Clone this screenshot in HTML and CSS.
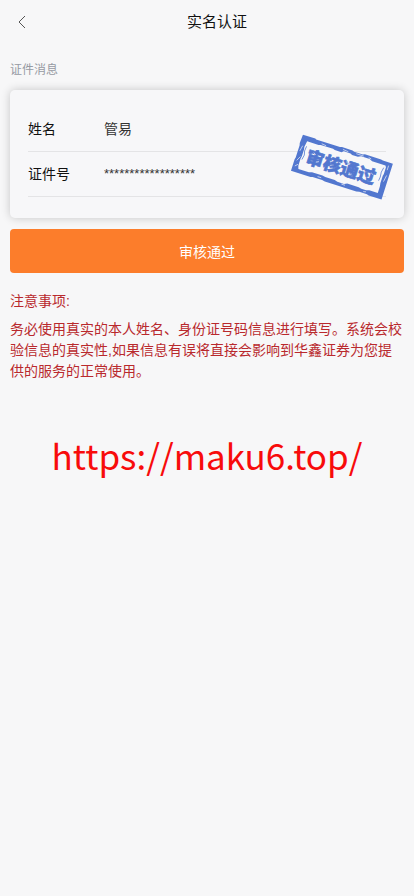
FILE: index.html
```html
<!DOCTYPE html>
<html lang="zh-CN">
<head>
<meta charset="utf-8">
<meta name="viewport" content="width=device-width, initial-scale=1">
<title>实名认证</title>
<link rel="stylesheet" href="styles.css">
</head>
<body>
<header class="navbar">
  <button class="back" type="button" aria-label="返回">
    <svg width="8" height="14" viewBox="0 0 8 14" fill="none" stroke="#555" stroke-width="1"><path d="M7 1 1 7l6 6"/></svg>
  </button>
  <h1 class="title">实名认证</h1>
</header>
<main class="page">
  <h2 class="section-label">证件消息</h2>
  <form class="form">
    <div class="card">
      <div class="row">
        <label class="row-label" for="name">姓名</label>
        <input class="row-input" id="name" type="text" value="管易" readonly>
      </div>
      <div class="row">
        <label class="row-label" for="idno">证件号</label>
        <input class="row-input masked" id="idno" type="text" value="******************" readonly>
      </div>
      <svg class="stamp" width="104" height="68" viewBox="0 0 104 68" aria-hidden="true">
        <g transform="translate(52 34) rotate(17.6)">
          <path fill="#5277cf" d="M-47-19H-34L-33-18.500H-8L-6-19H5L7-18.300H16L18-19H35L37-18.500H47.500V19H34L32 18.400H24L21 19H-12L-15 18.500H-25L-27 19H-47.500V7L-47 5V-8L-47.500-10Z"/>
          <path fill="#f7f7f9" d="M-41-14H-29L-27-14.600H-14L-12-14H-5L-3-15.500H4L6-14.500H12L15-16H24L27-14.500H41L42-13V-6L41.500-4V4L42 7V14H33L30 15H25L22 14.200H10L7 15.500H0L-3 14.500H-13L-16 14H-27L-30 15H-41L-42 12V5L-41.500 2V-5L-42-8Z"/>
          <g fill="none" stroke="#5277cf" stroke-width=".7">
            <path d="M-40-9l-.5 5 1 4-1 5M40-12l-1 5 .5 5-.5 4"/>
          </g>
          <text class="stamp-text" x="-1" y="7" text-anchor="middle">审核通过</text>
          <g fill="none" stroke="#f7f7f9" stroke-width=".6" stroke-linecap="round">
            <path d="M-44-8l-1 5M-43 3l-2 4M-45 13l2-2M-26-16l4 .5M-4-17l5 .5M10-17h7M23-17l2 .4M44-15v4M45-5l-1 6M28 17l2-.5M5 16.500h3M-20 16.500h3"/>
            <path d="M-31-5l2 1M-26 3l2-1M-11 5l2-1M3-6l2 1M9 5l2-1M24 5l1-2M30-3l2 1"/>
          </g>
        </g>
      </svg>
    </div>
    <button class="submit" type="button">审核通过</button>
  </form>
  <section class="notice">
    <h3 class="notice-title">注意事项:</h3>
    <p class="notice-text">务必使用真实的本人姓名、身份证号码信息进行填写。系统会校验信息的真实性,如果信息有误将直接会影响到华鑫证券为您提供的服务的正常使用。</p>
  </section>
  <p class="site-url">https://maku6.top/</p>
</main>
</body>
</html>
```
FILE: styles.css
```css
* {
  box-sizing: border-box;
}

body {
  margin: 0;
  min-height: 100vh;
  background: #f7f7f8;
  color: #111;
  font-family: "Liberation Sans", "Noto Sans CJK SC", sans-serif;
  font-size: 14px;
}

h1, h2, h3, p {
  margin: 0;
  font-weight: 400;
}

button, input {
  padding: 0;
  border: 0;
  background: none;
  color: inherit;
  font: inherit;
}

.navbar {
  display: grid;
  grid-template-columns: 44px 1fr 24px;
  align-items: center;
  height: 44px;
}

.back {
  display: flex;
  align-items: center;
  justify-content: center;
  height: 44px;
}

.title {
  font-size: 15px;
  line-height: 22px;
  text-align: center;
}

.page {
  padding: 15px 10px 0;
}

.section-label {
  color: #969aa3;
  font-size: 12px;
  line-height: 22px;
}

.form {
  display: grid;
  gap: 11px;
  margin-top: 9px;
}

.card {
  position: relative;
  padding: 17px 18px 21px;
  border-radius: 5px;
  background: #f7f7f9;
  box-shadow: 0 0 10px rgba(0, 0, 0, 0.2);
}

.row {
  display: flex;
  align-items: center;
  height: 45px;
  padding-bottom: 2px;
  border-bottom: 1px solid #e4e4e6;
}

.row-label {
  width: 76px;
}

.row-input {
  flex: 1;
  min-width: 0;
  height: 24px;
  color: #333;
  outline: none;
}

.masked {
  font-size: 13px;
}

.stamp {
  position: absolute;
  top: 43px;
  right: 10px;
}

.stamp-text {
  fill: #5277cf;
  stroke: #5277cf;
  stroke-width: 0.6px;
  font-family: "Noto Sans CJK SC", sans-serif;
  font-size: 18px;
  font-weight: 900;
}

.submit {
  height: 44px;
  border-radius: 4px;
  background: #fc7d2b;
  color: #fff;
}

.notice {
  margin-top: 18px;
  color: #b9292d;
  line-height: 21px;
}

.notice-title {
  font-size: 14px;
}

.notice-text {
  margin-top: 7px;
}

.site-url {
  margin-top: 47px;
  color: #f80b0b;
  font-family: "Noto Sans CJK SC", sans-serif;
  font-size: 35px;
  line-height: 52px;
  text-align: center;
}
```
